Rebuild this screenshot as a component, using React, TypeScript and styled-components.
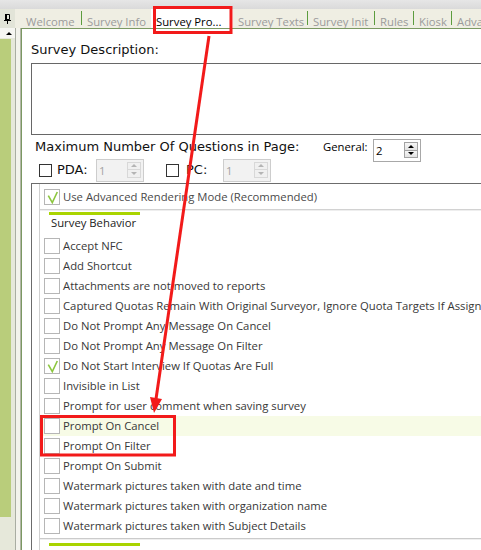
import { Fragment } from 'react';
import styled, { createGlobalStyle } from 'styled-components';

const RED = '#f21a1a';

const GlobalStyle = createGlobalStyle`
  * { box-sizing: border-box; }
  body {
    margin: 0;
    background: #ffffff;
    overflow: hidden;
  }
`;

const Screen = styled.div`
  position: relative;
  width: 481px;
  height: 550px;
  overflow: hidden;
  display: flex;
  flex-direction: column;
  font-family: 'Open Sans', 'Noto Sans', sans-serif;
  font-size: 11.3px;
  color: #383838;
`;

const TopBar = styled.div`
  height: 9px;
  flex-shrink: 0;
  background: linear-gradient(#e6e6e6, #dadada);
`;

const Body = styled.div`
  flex: 1;
  min-height: 0;
  display: flex;
`;

/* left auto-hide dock */
const Dock = styled.div`
  width: 15px;
  flex-shrink: 0;
  display: flex;
  flex-direction: column;
`;

const DockHeader = styled.div`
  height: 19px;
  background: #e2e4d8;
  display: flex;
  align-items: center;
  justify-content: center;
`;

const DockArrow = styled.div`
  height: 10px;
  background: #f6f6f2;
  display: flex;
  align-items: center;
  justify-content: center;
  padding-left: 2px;
`;

const UpTriangle = styled.span<{ $color?: string; $size?: number }>`
  width: 0;
  height: 0;
  border-left: ${(p) => p.$size ?? 3}px solid transparent;
  border-right: ${(p) => p.$size ?? 3}px solid transparent;
  border-bottom: ${(p) => p.$size ?? 3}px solid ${(p) => p.$color ?? '#000'};
`;

const DownTriangle = styled.span<{ $color?: string; $size?: number }>`
  width: 0;
  height: 0;
  border-left: ${(p) => p.$size ?? 3}px solid transparent;
  border-right: ${(p) => p.$size ?? 3}px solid transparent;
  border-top: ${(p) => p.$size ?? 3}px solid ${(p) => p.$color ?? '#000'};
`;

const Track = styled.div`
  flex: 1;
  background: #e6e8da;
  padding-top: 1px;
`;

const Thumb = styled.div`
  width: 11px;
  height: 478px;
  background: #b9cd7b;
`;

const Gutter = styled.div`
  width: 6px;
  flex-shrink: 0;
  display: flex;
  flex-direction: column;
`;

const GutterTop = styled.div`
  height: 19px;
  background: #efeee3;
`;

const GutterBody = styled.div`
  flex: 1;
  background: #f3f3ec;
  border-left: 1px solid #a9ada2;
  border-right: 1px solid #b3b7a8;
`;

const Main = styled.div`
  flex: 1;
  min-width: 0;
  display: flex;
  flex-direction: column;
`;

/* tabs */
const TabStrip = styled.div`
  height: 20px;
  flex-shrink: 0;
  background: #efeee3;
  border-bottom: 1px solid #7b9862;
  display: flex;
  white-space: nowrap;
  overflow: hidden;
`;

const Tab = styled.div<{ $w: number; $active?: boolean }>`
  width: ${(p) => p.$w}px;
  flex-shrink: 0;
  height: ${(p) => (p.$active ? 20 : 19)}px;
  padding: 5px 0 0 5px;
  line-height: 15px;
  color: ${(p) => (p.$active ? '#000' : '#9b9b9b')};
  background: ${(p) => (p.$active ? '#ffffff' : 'transparent')};
`;

const TabSep = styled.div`
  width: 1px;
  height: 14px;
  margin-top: 2px;
  flex-shrink: 0;
  background: #5c9c3e;
`;

/* panel */
const Panel = styled.div`
  flex: 1;
  min-height: 0;
  background: #ffffff;
  border-left: 1px solid #7b9862;
  padding: 13px 0 0 9px;
  display: flex;
  flex-direction: column;
  overflow: hidden;
`;

const BigLabel = styled.div<{ $w?: number; $left?: number }>`
  font-family: 'DejaVu Sans', Verdana, sans-serif;
  font-size: 13px;
  line-height: 16px;
  color: #111;
  white-space: nowrap;
  flex-shrink: 0;
  margin-left: ${(p) => p.$left ?? 0}px;
  ${(p) => (p.$w ? `width: ${p.$w}px;` : '')}
`;

const DescriptionBox = styled.div`
  margin-top: 5px;
  width: 470px;
  height: 72px;
  flex-shrink: 0;
  border: 1px solid #676767;
`;

const FormRow = styled.div<{ $h: number; $top: number; $align?: string }>`
  height: ${(p) => p.$h}px;
  margin-top: ${(p) => p.$top}px;
  flex-shrink: 0;
  display: flex;
  align-items: ${(p) => p.$align ?? 'center'};
`;

const SmallLabel = styled.div<{ $w?: number }>`
  line-height: 16px;
  color: #000;
  white-space: nowrap;
  ${(p) => (p.$w ? `width: ${p.$w}px;` : '')}
`;

const Spinner = styled.div<{ $disabled?: boolean }>`
  width: 48px;
  height: 23px;
  flex-shrink: 0;
  border: 1px solid ${(p) => (p.$disabled ? '#cdcdcd' : '#a8a8a8')};
  background: ${(p) => (p.$disabled ? '#f2f2f2' : '#ffffff')};
  display: flex;
  justify-content: space-between;
  padding: 2px;
`;

const SpinValue = styled.span<{ $disabled?: boolean }>`
  line-height: 16px;
  padding-top: 1px;
  color: ${(p) => (p.$disabled ? '#a3a3a3' : '#000')};
`;

const SpinButtons = styled.div`
  width: 14px;
  height: 16px;
  display: flex;
  flex-direction: column;
`;

const SpinButton = styled.div<{ $disabled?: boolean }>`
  flex: 1;
  border: 1px solid ${(p) => (p.$disabled ? '#d8d8d8' : '#a2a2a2')};
  background: ${(p) => (p.$disabled ? '#f0f0f0' : 'linear-gradient(#f6f6f6, #e3e3e3)')};
  display: flex;
  align-items: center;
  justify-content: center;

  & + & {
    border-top: none;
  }
`;

const Check = styled.span<{ $variant: 'dark' | 'light'; $left?: number }>`
  width: ${(p) => (p.$variant === 'dark' ? 13 : 16)}px;
  height: ${(p) => (p.$variant === 'dark' ? 13 : 16)}px;
  flex-shrink: 0;
  margin-left: ${(p) => p.$left ?? 0}px;
  border: 1px solid ${(p) => (p.$variant === 'dark' ? '#333333' : '#b6b6b6')};
  background: #ffffff;
  display: flex;
`;

/* behaviour list */
const ListPanel = styled.div`
  margin-top: 1px;
  flex: 1;
  width: 460px;
  border-top: 1px solid #6c6c6c;
  border-left: 1px solid #6c6c6c;
  padding-left: 7px;
  display: flex;
`;

const Inner = styled.div`
  flex: 1;
  border-left: 1px solid #d0d0d0;
  display: flex;
  flex-direction: column;
`;

const AdvancedRow = styled.div`
  height: 26px;
  flex-shrink: 0;
  border-bottom: 1px solid #d2d2d2;
  box-shadow: 0 1px 0 #eeeeee;
  padding-left: 4px;
  display: flex;
  align-items: center;
  gap: 3px;
  white-space: nowrap;
  color: #4a4a4a;
`;

const SectionBar = styled.div<{ $top: number }>`
  margin: ${(p) => p.$top}px 0 0 9px;
  width: 91px;
  height: 3px;
  flex-shrink: 0;
  background: #a9d400;
`;

const SectionTitle = styled.div`
  padding-left: 11px;
  line-height: 16px;
  color: #222;
  flex-shrink: 0;
`;

const List = styled.div`
  margin-top: 5px;
  padding-bottom: 2px;
  border-bottom: 1px solid #cbcbcb;
  box-shadow: 0 1px 0 #efefef;
  flex-shrink: 0;
`;

const Row = styled.div<{ $highlight?: boolean }>`
  height: 20px;
  padding-left: 4px;
  display: flex;
  align-items: center;
  gap: 3px;
  white-space: nowrap;
  line-height: 20px;
  background: ${(p) => (p.$highlight ? '#f7fbe6' : 'transparent')};
`;

const Annotations = styled.svg`
  position: absolute;
  left: 0;
  top: 0;
  pointer-events: none;
`;

const tabs = [
  { label: 'Welcome', w: 60, sep: true },
  { label: 'Survey Info', w: 69 },
  { label: 'Survey Pro...', w: 82, active: true },
  { label: 'Survey Texts', w: 74, sep: true },
  { label: 'Survey Init', w: 66, sep: true },
  { label: 'Rules', w: 38, sep: true },
  { label: 'Kiosk', w: 37, sep: true },
  { label: 'Advanced', w: 60 },
];

const behaviors = [
  { label: 'Accept NFC' },
  { label: 'Add Shortcut' },
  { label: 'Attachments are not moved to reports' },
  { label: 'Captured Quotas Remain With Original Surveyor, Ignore Quota Targets If Assigned' },
  { label: 'Do Not Prompt Any Message On Cancel' },
  { label: 'Do Not Prompt Any Message On Filter' },
  { label: 'Do Not Start Interview If Quotas Are Full', checked: true },
  { label: 'Invisible in List' },
  { label: 'Prompt for user comment when saving survey' },
  { label: 'Prompt On Cancel', highlight: true },
  { label: 'Prompt On Filter' },
  { label: 'Prompt On Submit' },
  { label: 'Watermark pictures taken with date and time' },
  { label: 'Watermark pictures taken with organization name' },
  { label: 'Watermark pictures taken with Subject Details' },
];

function PinIcon() {
  return (
    <svg width="7" height="10" viewBox="0 0 7 10">
      <path d="M1.5 0.5 H5.5 V5.5 H1.5 Z" fill="none" stroke="#000" />
      <rect x="1" y="0" width="2" height="6" fill="#000" />
      <path d="M0 6.5 H7" stroke="#000" />
      <path d="M3.5 7 V10" stroke="#000" />
    </svg>
  );
}

function GreenCheck() {
  return (
    <svg width="14" height="14" viewBox="0 0 14 14">
      <polyline
        points="3.3,5.6 7.3,12.6 12.3,2"
        fill="none"
        stroke="#8cc63f"
        strokeWidth="1.6"
      />
    </svg>
  );
}

function NumberSpinner({ value, disabled }: { value: string; disabled?: boolean }) {
  const arrow = disabled ? '#b4b4b4' : '#000';
  return (
    <Spinner $disabled={disabled}>
      <SpinValue $disabled={disabled}>{value}</SpinValue>
      <SpinButtons>
        <SpinButton $disabled={disabled}>
          <UpTriangle $color={arrow} $size={3} />
        </SpinButton>
        <SpinButton $disabled={disabled}>
          <DownTriangle $color={arrow} $size={3} />
        </SpinButton>
      </SpinButtons>
    </Spinner>
  );
}

export default function App() {
  return (
    <Screen>
      <GlobalStyle />
      <TopBar />
      <Body>
        <Dock>
          <DockHeader>
            <PinIcon />
          </DockHeader>
          <DockArrow>
            <UpTriangle $size={3} />
          </DockArrow>
          <Track>
            <Thumb />
          </Track>
        </Dock>
        <Gutter>
          <GutterTop />
          <GutterBody />
        </Gutter>
        <Main>
          <TabStrip>
            {tabs.map((t) => (
              <Fragment key={t.label}>
                <Tab $w={t.w} $active={t.active}>
                  {t.label}
                </Tab>
                {t.sep && <TabSep />}
              </Fragment>
            ))}
          </TabStrip>
          <Panel>
            <BigLabel>Survey Description:</BigLabel>
            <DescriptionBox />
            <FormRow $h={23} $top={4} $align="flex-start">
              <BigLabel $w={288} $left={4}>
                Maximum Number Of Questions in Page:
              </BigLabel>
              <SmallLabel $w={50}>General:</SmallLabel>
              <NumberSpinner value="2" />
            </FormRow>
            <FormRow $h={24} $top={-4}>
              <Check $variant="dark" $left={8} />
              <BigLabel $w={39} $left={5}>
                PDA:
              </BigLabel>
              <NumberSpinner value="1" disabled />
              <Check $variant="dark" $left={22} />
              <BigLabel $w={37} $left={7}>
                PC:
              </BigLabel>
              <NumberSpinner value="1" disabled />
            </FormRow>
            <ListPanel>
              <Inner>
                <AdvancedRow>
                  <Check $variant="light">
                    <GreenCheck />
                  </Check>
                  Use Advanced Rendering Mode (Recommended)
                </AdvancedRow>
                <SectionBar $top={2} />
                <SectionTitle>Survey Behavior</SectionTitle>
                <List>
                  {behaviors.map((b) => (
                    <Row key={b.label} $highlight={b.highlight}>
                      <Check $variant="light">{b.checked && <GreenCheck />}</Check>
                      {b.label}
                    </Row>
                  ))}
                </List>
                <SectionBar $top={4} />
                <SectionTitle>Data Processing</SectionTitle>
              </Inner>
            </ListPanel>
          </Panel>
        </Main>
      </Body>
      <Annotations width={481} height={550} viewBox="0 0 481 550">
        <rect x={154.5} y={7.5} width={76.5} height={25} fill="none" stroke={RED} strokeWidth={3} />
        <rect x={41.5} y={416.5} width={133} height={38.5} fill="none" stroke={RED} strokeWidth={3} />
        <line x1={209} y1={36} x2={156} y2={399} stroke={RED} strokeWidth={3} />
        <polygon points="154,413 150,397 162,399" fill={RED} />
      </Annotations>
    </Screen>
  );
}
